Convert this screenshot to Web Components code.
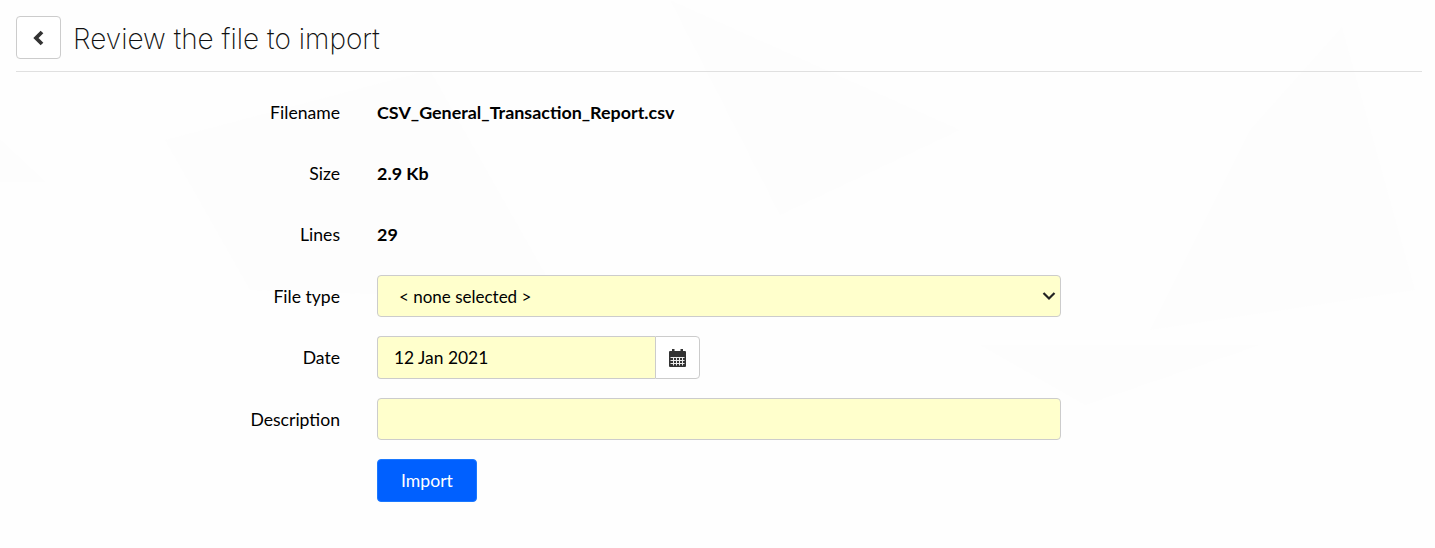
<!DOCTYPE html>
<html>
<head>
<meta charset="utf-8">
<title>Review the file to import</title>
<style>
  html, body { margin: 0; height: 100%; }
  body { background: #fefefe; color: #000; font-family: "Lato", "Liberation Sans", sans-serif; font-size: 17.6px; overflow: hidden; }
  strong { font-weight: 700; font-size: 17.9px; }
</style>
</head>
<body>
<import-page>
  <page-header slot="header" title-text="Review the file to import"></page-header>
  <form-row label="Filename"><strong>CSV_General_Transaction_Report.csv</strong></form-row>
  <form-row label="Size"><strong>2.9 Kb</strong></form-row>
  <form-row label="Lines" style="margin-bottom: 20px"><strong>29</strong></form-row>
  <form-row label="File type"><yellow-select value="&lt; none selected &gt;"></yellow-select></form-row>
  <form-row label="Date"><date-field value="12 Jan 2021"></date-field></form-row>
  <form-row label="Description"><yellow-input></yellow-input></form-row>
  <form-row><primary-button>Import</primary-button></form-row>
</import-page>

<script>
class ImportPage extends HTMLElement {
  constructor() {
    super();
    this.attachShadow({ mode: 'open' }).innerHTML = `
      <style>
        :host { display: block; position: relative; height: 548px; overflow: hidden; }
        .backdrop { position: absolute; left: 0; top: 0; z-index: 0; }
        .content { position: relative; z-index: 1; padding: 16px 13px 0 16px; }
        .rows { display: flex; flex-direction: column; padding-top: 19px; }
      </style>
      <svg class="backdrop" width="1435" height="548" viewBox="0 0 1435 548" fill="#fdfdfd">
        <polygon points="0,140 45,182 0,182"/>
        <polygon points="165,140 430,70 560,300 250,290"/>
        <polygon points="670,0 960,130 780,215"/>
        <polygon points="1342,27 1415,290 1150,330 1250,130"/>
        <polygon points="980,345 1260,345 1085,405"/>
      </svg>
      <div class="content">
        <slot name="header"></slot>
        <div class="rows"><slot></slot></div>
      </div>`;
  }
}

class PageHeader extends HTMLElement {
  constructor() {
    super();
    this.attachShadow({ mode: 'open' }).innerHTML = `
      <style>
        :host { display: flex; align-items: center; gap: 12px; height: 55px; border-bottom: 1px solid #e0e0e0; }
        .back { box-sizing: border-box; width: 45px; height: 43px; margin-bottom: 12px; display: flex; align-items: center; justify-content: center; background: #fff; border: 1px solid #ccc; border-radius: 4px; }
        h1 { margin: 0 0 9px; font: 200 28px "Inter", "Liberation Sans", sans-serif; color: #111; }
      </style>
      <div class="back">
        <svg width="14" height="18" viewBox="0 0 14 18"><path d="M10 3 L4 9 L10 15" fill="none" stroke="#333" stroke-width="3.8"/></svg>
      </div>
      <h1>${this.getAttribute('title-text')}</h1>`;
  }
}

class FormRow extends HTMLElement {
  constructor() {
    super();
    const label = this.getAttribute('label') || '';
    this.attachShadow({ mode: 'open' }).innerHTML = `
      <style>
        :host { display: grid; grid-template-columns: 324px 684px; column-gap: 37px; align-items: center; min-height: 42px; margin-bottom: 19px; }
        .label { text-align: right; }
      </style>
      <div class="label">${label}</div>
      <div><slot></slot></div>`;
  }
}

const fieldStyle = `
  box-sizing: border-box; height: 42px; background: #ffffcc; color: #000;
  border: 1px solid #ccc; font: 17.4px "Lato", "Liberation Sans", sans-serif;`;

class YellowSelect extends HTMLElement {
  constructor() {
    super();
    this.attachShadow({ mode: 'open' }).innerHTML = `
      <style>
        :host { display: block; }
        .box { ${fieldStyle} font-size: 17px; border-radius: 4px; display: flex; align-items: center; justify-content: space-between; padding: 0 4px 0 21px; }
      </style>
      <div class="box">
        <span>${this.getAttribute('value').replace(/</g, '&lt;')}</span>
        <svg width="14" height="10" viewBox="0 0 14 10"><path d="M1.5 2 L7 7.5 L12.5 2" fill="none" stroke="#222" stroke-width="2.2"/></svg>
      </div>`;
  }
}

class DateField extends HTMLElement {
  constructor() {
    super();
    this.attachShadow({ mode: 'open' }).innerHTML = `
      <style>
        :host { display: flex; width: 323px; }
        .value { ${fieldStyle} height: 43px; flex: 1; display: flex; align-items: center; padding-left: 16px; border-radius: 4px 0 0 4px; border-right: 0; }
        .addon { box-sizing: border-box; width: 45px; height: 43px; display: flex; align-items: center; justify-content: center; background: #fff; border: 1px solid #ccc; border-radius: 0 4px 4px 0; }
      </style>
      <div class="value">${this.getAttribute('value')}</div>
      <div class="addon">
        <svg width="17" height="18" viewBox="0 0 17 18">
          <rect x="0" y="2" width="17" height="16" rx="1" fill="#333"/>
          <rect x="3" y="0" width="2.5" height="4" fill="#333"/>
          <rect x="11.5" y="0" width="2.5" height="4" fill="#333"/>
          <path d="M1.5 8.5 H15.5 M1.5 11.5 H15.5 M1.5 14.5 H15.5 M4.5 8 V16.5 M7.5 8 V16.5 M10.5 8 V16.5 M13.5 8 V16.5" stroke="#fff" stroke-width="1" opacity=".9"/>
        </svg>
      </div>`;
  }
}

class YellowInput extends HTMLElement {
  constructor() {
    super();
    this.attachShadow({ mode: 'open' }).innerHTML = `
      <style>
        :host { display: block; }
        .box { ${fieldStyle} border-radius: 4px; }
      </style>
      <div class="box"></div>`;
  }
}

class PrimaryButton extends HTMLElement {
  constructor() {
    super();
    this.attachShadow({ mode: 'open' }).innerHTML = `
      <style>
        :host { display: inline-flex; box-sizing: border-box; width: 100px; height: 43px; align-items: center; justify-content: center; background: #0060ff; color: #fff; border: 1px solid #1a78ff; border-radius: 4px; vertical-align: top; }
      </style>
      <slot></slot>`;
  }
}

customElements.define('import-page', ImportPage);
customElements.define('page-header', PageHeader);
customElements.define('form-row', FormRow);
customElements.define('yellow-select', YellowSelect);
customElements.define('date-field', DateField);
customElements.define('yellow-input', YellowInput);
customElements.define('primary-button', PrimaryButton);
</script>
</body>
</html>
